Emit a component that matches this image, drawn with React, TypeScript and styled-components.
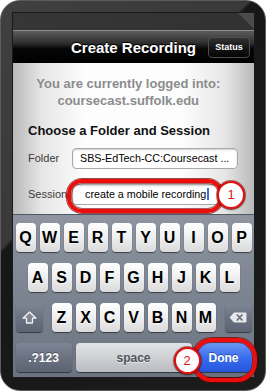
import React from "react";
import styled, { createGlobalStyle } from "styled-components";

const Global = createGlobalStyle`
  html, body { margin: 0; padding: 0; background: #fff; }
  body { font-family: "Liberation Sans", Arial, sans-serif; }
  * { box-sizing: border-box; }
`;

const FONT = `"Liberation Sans", Arial, Helvetica, sans-serif`;

const Frame = styled.div`
  position: relative;
  width: 266px;
  height: 391px;
  border: 1px solid #5c5c5c;
  border-radius: 20px;
  padding: 12px 11px 13px 12px;
  background: linear-gradient(135deg, #404040 0%, #393939 38%, #171717 38.6%, #1c1c1c 100%);
  overflow: hidden;
`;

const Screen = styled.div`
  width: 241px;
  height: 364px;
  display: flex;
  flex-direction: column;
  box-shadow: 0 0 0 1px #1a1a1a;
`;

const StatusBar = styled.div`
  height: 18px;
  flex: none;
  background: linear-gradient(225deg, #4b4b4b 0, #4b4b4b 11px, #323232 11.5px, #363636 100%);
  border-bottom: 1px solid #8c8c8c;
`;

const NavBar = styled.div`
  height: 32px;
  flex: none;
  display: grid;
  grid-template-columns: 1fr auto 1fr;
  align-items: center;
  background: linear-gradient(#5c5c5c 0%, #2e2e2e 38%, #060606 55%, #000 100%);
`;

const Title = styled.h1`
  grid-column: 2;
  margin: 0;
  font: bold 15px/1 ${FONT};
  color: #fff;
  text-shadow: 0 -1px 0 #000;
`;

const StatusButton = styled.div`
  grid-column: 3;
  justify-self: end;
  margin-right: 4px;
  width: 42px;
  height: 21px;
  border-radius: 4px;
  border: 1px solid #4e4e4e;
  background: linear-gradient(#333 0%, #161616 50%, #050505 100%);
  display: flex;
  align-items: center;
  justify-content: center;
  font: bold 9px/1 ${FONT};
  color: #fff;
`;

const Content = styled.div`
  flex: 1;
  display: flex;
  flex-direction: column;
  padding: 13.2px 16px 0 15px;
  background: linear-gradient(
    to right,
    #b9b9b9 0%,
    #e6e6e6 12%,
    #fdfdfd 30%,
    #fdfdfd 70%,
    #e6e6e6 88%,
    #b9b9b9 100%
  );
`;

const LoginInfo = styled.p`
  margin: 0 9.5px 0 0;
  text-align: center;
  font: bold 13px/16.5px ${FONT};
  color: #8c8c8c;
`;

const SectionTitle = styled.h2`
  margin: 14.3px 0 0;
  font: bold 13px/16px ${FONT};
  color: #111;
`;

const FieldRow = styled.div<{ $gap: number }>`
  display: flex;
  align-items: center;
  height: 21px;
  margin-top: ${(p) => p.$gap}px;
`;

const Label = styled.span`
  width: 44px;
  flex: none;
  font: 11px/1 ${FONT};
  color: #3a3a3a;
`;

const Input = styled.div<{ $pad: number }>`
  flex: 1;
  height: 21px;
  background: #fff;
  border: 1px solid #a9a9a9;
  border-radius: 4px;
  padding-left: ${(p) => p.$pad}px;
  display: flex;
  align-items: center;
  font: 10.75px/1 ${FONT};
  color: #000;
  white-space: nowrap;
  overflow: hidden;
  box-shadow: inset 0 1px 2px rgba(0, 0, 0, 0.2);
`;

const Caret = styled.span`
  display: inline-block;
  width: 2px;
  height: 12px;
  margin-left: 1px;
  background: #3a6fe2;
`;

const Keyboard = styled.div`
  height: 163px;
  flex: none;
  padding: 8px 2.5px 0;
  display: flex;
  flex-direction: column;
  gap: 11px;
  border-top: 1px solid #525863;
  background: linear-gradient(#8e95a1, #6b7280);
`;

const KeyRow = styled.div<{ $spread?: boolean }>`
  display: flex;
  gap: 4px;
  justify-content: ${(p) => (p.$spread ? "space-between" : "center")};
`;

const LetterGroup = styled.div`
  display: flex;
  gap: 4px;
`;

type Variant = "letter" | "mod" | "space" | "done";

const backgrounds: Record<Variant, string> = {
  letter: "linear-gradient(#ffffff 0%, #f1f1f1 45%, #dadada 100%)",
  mod: "linear-gradient(#7f8695 0%, #6a7180 50%, #5c6372 100%)",
  space: "linear-gradient(#e2e3e6 0%, #cfd1d5 50%, #b7bac0 100%)",
  done: "linear-gradient(#6a98f6 0%, #3a6ded 50%, #2356dc 100%)",
};

const colors: Record<Variant, string> = {
  letter: "#000",
  mod: "#fff",
  space: "#50555e",
  done: "#fff",
};

const Key = styled.div<{ $w?: number; $v?: Variant }>`
  width: ${(p) => p.$w ?? 20}px;
  height: 29px;
  flex: none;
  border-radius: 4px;
  display: flex;
  align-items: center;
  justify-content: center;
  background: ${(p) => backgrounds[p.$v ?? "letter"]};
  color: ${(p) => colors[p.$v ?? "letter"]};
  font: bold ${(p) => ((p.$v ?? "letter") === "letter" ? 16 : 12)}px/1 ${FONT};
  box-shadow: 0 1px 1px rgba(0, 0, 0, 0.55);
  text-shadow: ${(p) =>
    (p.$v ?? "letter") === "letter" || p.$v === "space"
      ? "0 1px 0 rgba(255,255,255,0.6)"
      : "0 -1px 0 rgba(0,0,0,0.35)"};
`;

const Ring = styled.div<{ $l: number; $t: number; $w: number; $h: number; $r: number }>`
  position: absolute;
  left: ${(p) => p.$l}px;
  top: ${(p) => p.$t}px;
  width: ${(p) => p.$w}px;
  height: ${(p) => p.$h}px;
  border-radius: ${(p) => p.$r}px;
  border: 4px solid #ec0d0d;
  box-shadow: 0 0 0 1px rgba(110, 0, 0, 0.7), inset 0 0 0 1px rgba(110, 0, 0, 0.6);
  pointer-events: none;
`;

const Badge = styled.div<{ $l: number; $t: number; $s: number }>`
  position: absolute;
  left: ${(p) => p.$l}px;
  top: ${(p) => p.$t}px;
  width: ${(p) => p.$s}px;
  height: ${(p) => p.$s}px;
  border-radius: 50%;
  background: #fff;
  border: 2px solid #e21111;
  box-shadow: 0 0 0 1px rgba(110, 0, 0, 0.5), 0 1px 2px rgba(0, 0, 0, 0.4);
  display: flex;
  align-items: center;
  justify-content: center;
  font: 13px/1 ${FONT};
  color: #e21111;
`;

const ShiftIcon = () => (
  <svg width="15" height="13" viewBox="0 0 15 13">
    <path
      d="M7.5 1 L14 7.2 H10.5 V12 H4.5 V7.2 H1 Z"
      fill="rgba(255,255,255,0.15)"
      stroke="#f2f2f2"
      strokeWidth="1.3"
      strokeLinejoin="round"
    />
  </svg>
);

const BackspaceIcon = () => (
  <svg width="18" height="11" viewBox="0 0 18 11">
    <path d="M5 0.5 H16.5 a1 1 0 0 1 1 1 V9.5 a1 1 0 0 1 -1 1 H5 L0.5 5.5 Z" fill="#e6e7ea" />
    <path
      d="M8.3 3 L13 8 M13 3 L8.3 8"
      stroke="#656c7a"
      strokeWidth="1.7"
      strokeLinecap="round"
    />
  </svg>
);

const row1 = ["Q", "W", "E", "R", "T", "Y", "U", "I", "O", "P"];
const row2 = ["A", "S", "D", "F", "G", "H", "J", "K", "L"];
const row3 = ["Z", "X", "C", "V", "B", "N", "M"];

export default function App() {
  return (
    <>
      <Global />
      <Frame>
        <Screen>
          <StatusBar />
          <NavBar>
            <Title>Create Recording</Title>
            <StatusButton>Status</StatusButton>
          </NavBar>
          <Content>
            <LoginInfo>
              You are currently logged into:
              <br />
              coursecast.suffolk.edu
            </LoginInfo>
            <SectionTitle>Choose a Folder and Session</SectionTitle>
            <FieldRow $gap={8.5}>
              <Label>Folder</Label>
              <Input $pad={7}>SBS-EdTech-CC:Coursecast ...</Input>
            </FieldRow>
            <FieldRow $gap={15}>
              <Label>Session</Label>
              <Input $pad={12}>
                create a mobile recording
                <Caret />
              </Input>
            </FieldRow>
          </Content>
          <Keyboard>
            <KeyRow>
              {row1.map((k) => (
                <Key key={k}>{k}</Key>
              ))}
            </KeyRow>
            <KeyRow>
              {row2.map((k) => (
                <Key key={k}>{k}</Key>
              ))}
            </KeyRow>
            <KeyRow $spread>
              <Key $w={27} $v="mod">
                <ShiftIcon />
              </Key>
              <LetterGroup>
                {row3.map((k) => (
                  <Key key={k}>{k}</Key>
                ))}
              </LetterGroup>
              <Key $w={27} $v="mod">
                <BackspaceIcon />
              </Key>
            </KeyRow>
            <KeyRow>
              <Key $w={56} $v="mod">.?123</Key>
              <Key $w={116} $v="space">space</Key>
              <Key $w={56} $v="done">Done</Key>
            </KeyRow>
          </Keyboard>
        </Screen>
        <Ring $l={66} $t={178} $w={156} $h={33.5} $r={15} />
        <Badge $l={216} $t={179.5} $s={28}>1</Badge>
        <Ring $l={191} $t={337} $w={65} $h={43.5} $r={20} />
        <Badge $l={172.5} $t={346} $s={27}>2</Badge>
      </Frame>
    </>
  );
}
